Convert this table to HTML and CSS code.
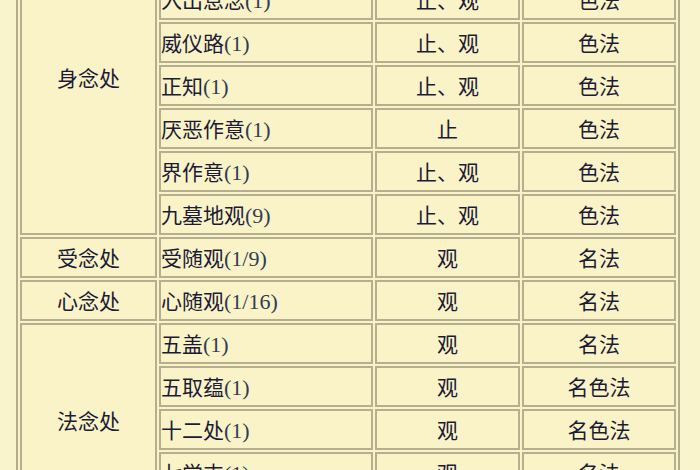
FILE: index.html
```html
<!DOCTYPE html>
<html lang="zh">
<head>
<meta charset="utf-8">
<title>四念处</title>
<link rel="stylesheet" href="styles.css">
</head>
<body>
<table class="grid">
  <colgroup>
    <col class="c-place">
    <col class="c-topic">
    <col class="c-method">
    <col class="c-dhamma">
  </colgroup>
  <tbody>
    <tr>
      <td class="label label-body" rowspan="6">身念处</td>
      <td class="topic">入出息念<span class="num">(1)</span></td>
      <td class="mid">止、观</td>
      <td class="mid">色法</td>
    </tr>
    <tr>
      <td class="topic">威仪路<span class="num">(1)</span></td>
      <td class="mid">止、观</td>
      <td class="mid">色法</td>
    </tr>
    <tr>
      <td class="topic">正知<span class="num">(1)</span></td>
      <td class="mid">止、观</td>
      <td class="mid">色法</td>
    </tr>
    <tr>
      <td class="topic">厌恶作意<span class="num">(1)</span></td>
      <td class="mid">止</td>
      <td class="mid">色法</td>
    </tr>
    <tr>
      <td class="topic">界作意<span class="num">(1)</span></td>
      <td class="mid">止、观</td>
      <td class="mid">色法</td>
    </tr>
    <tr>
      <td class="topic">九墓地观<span class="num">(9)</span></td>
      <td class="mid">止、观</td>
      <td class="mid">色法</td>
    </tr>
    <tr>
      <td class="label">受念处</td>
      <td class="topic">受随观<span class="num">(1/9)</span></td>
      <td class="mid">观</td>
      <td class="mid">名法</td>
    </tr>
    <tr>
      <td class="label">心念处</td>
      <td class="topic">心随观<span class="num">(1/16)</span></td>
      <td class="mid">观</td>
      <td class="mid">名法</td>
    </tr>
    <tr>
      <td class="label label-dhamma" rowspan="5">法念处</td>
      <td class="topic">五盖<span class="num">(1)</span></td>
      <td class="mid">观</td>
      <td class="mid">名法</td>
    </tr>
    <tr>
      <td class="topic">五取蕴<span class="num">(1)</span></td>
      <td class="mid">观</td>
      <td class="mid">名色法</td>
    </tr>
    <tr>
      <td class="topic">十二处<span class="num">(1)</span></td>
      <td class="mid">观</td>
      <td class="mid">名色法</td>
    </tr>
    <tr>
      <td class="topic">七觉支<span class="num">(1)</span></td>
      <td class="mid">观</td>
      <td class="mid">名法</td>
    </tr>
    <tr>
      <td class="topic">四圣谛<span class="num">(1)</span></td>
      <td class="mid">观</td>
      <td class="mid">名法</td>
    </tr>
  </tbody>
</table>
</body>
</html>
```
FILE: styles.css
```css
html, body {
  margin: 0;
  padding: 0;
  background: #faf4cc;
}

body {
  padding-left: 16px;
  color: #1b1b36;
  font-family: "Noto Sans CJK SC", "Noto Sans CJK TC", sans-serif;
  font-size: 21px;
}

.grid {
  margin-top: -25px;
  width: 664px;
  table-layout: fixed;
  border-collapse: separate;
  border-spacing: 2px;
  border: 2px solid #b4ad8d;
  background: #faf3c8;
}

.c-place { width: 137px; }
.c-topic { width: 214px; }
.c-method { width: 145px; }
.c-dhamma { width: 154px; }

.grid td {
  box-sizing: border-box;
  height: 41px;
  border: 2px solid #b6af8f;
  padding: 0;
  line-height: 35px;
  white-space: nowrap;
  overflow: hidden;
  vertical-align: middle;
}

.grid .label {
  text-align: center;
}

.grid .label-body {
  padding-bottom: 60px;
}

.grid .label-dhamma {
  padding-bottom: 18px;
}

.topic {
  text-align: left;
}

.mid {
  text-align: center;
}

.num {
  font-family: "Liberation Serif", "Times New Roman", serif;
  font-size: 22px;
  line-height: 1;
  color: #2e3d52;
}
```
